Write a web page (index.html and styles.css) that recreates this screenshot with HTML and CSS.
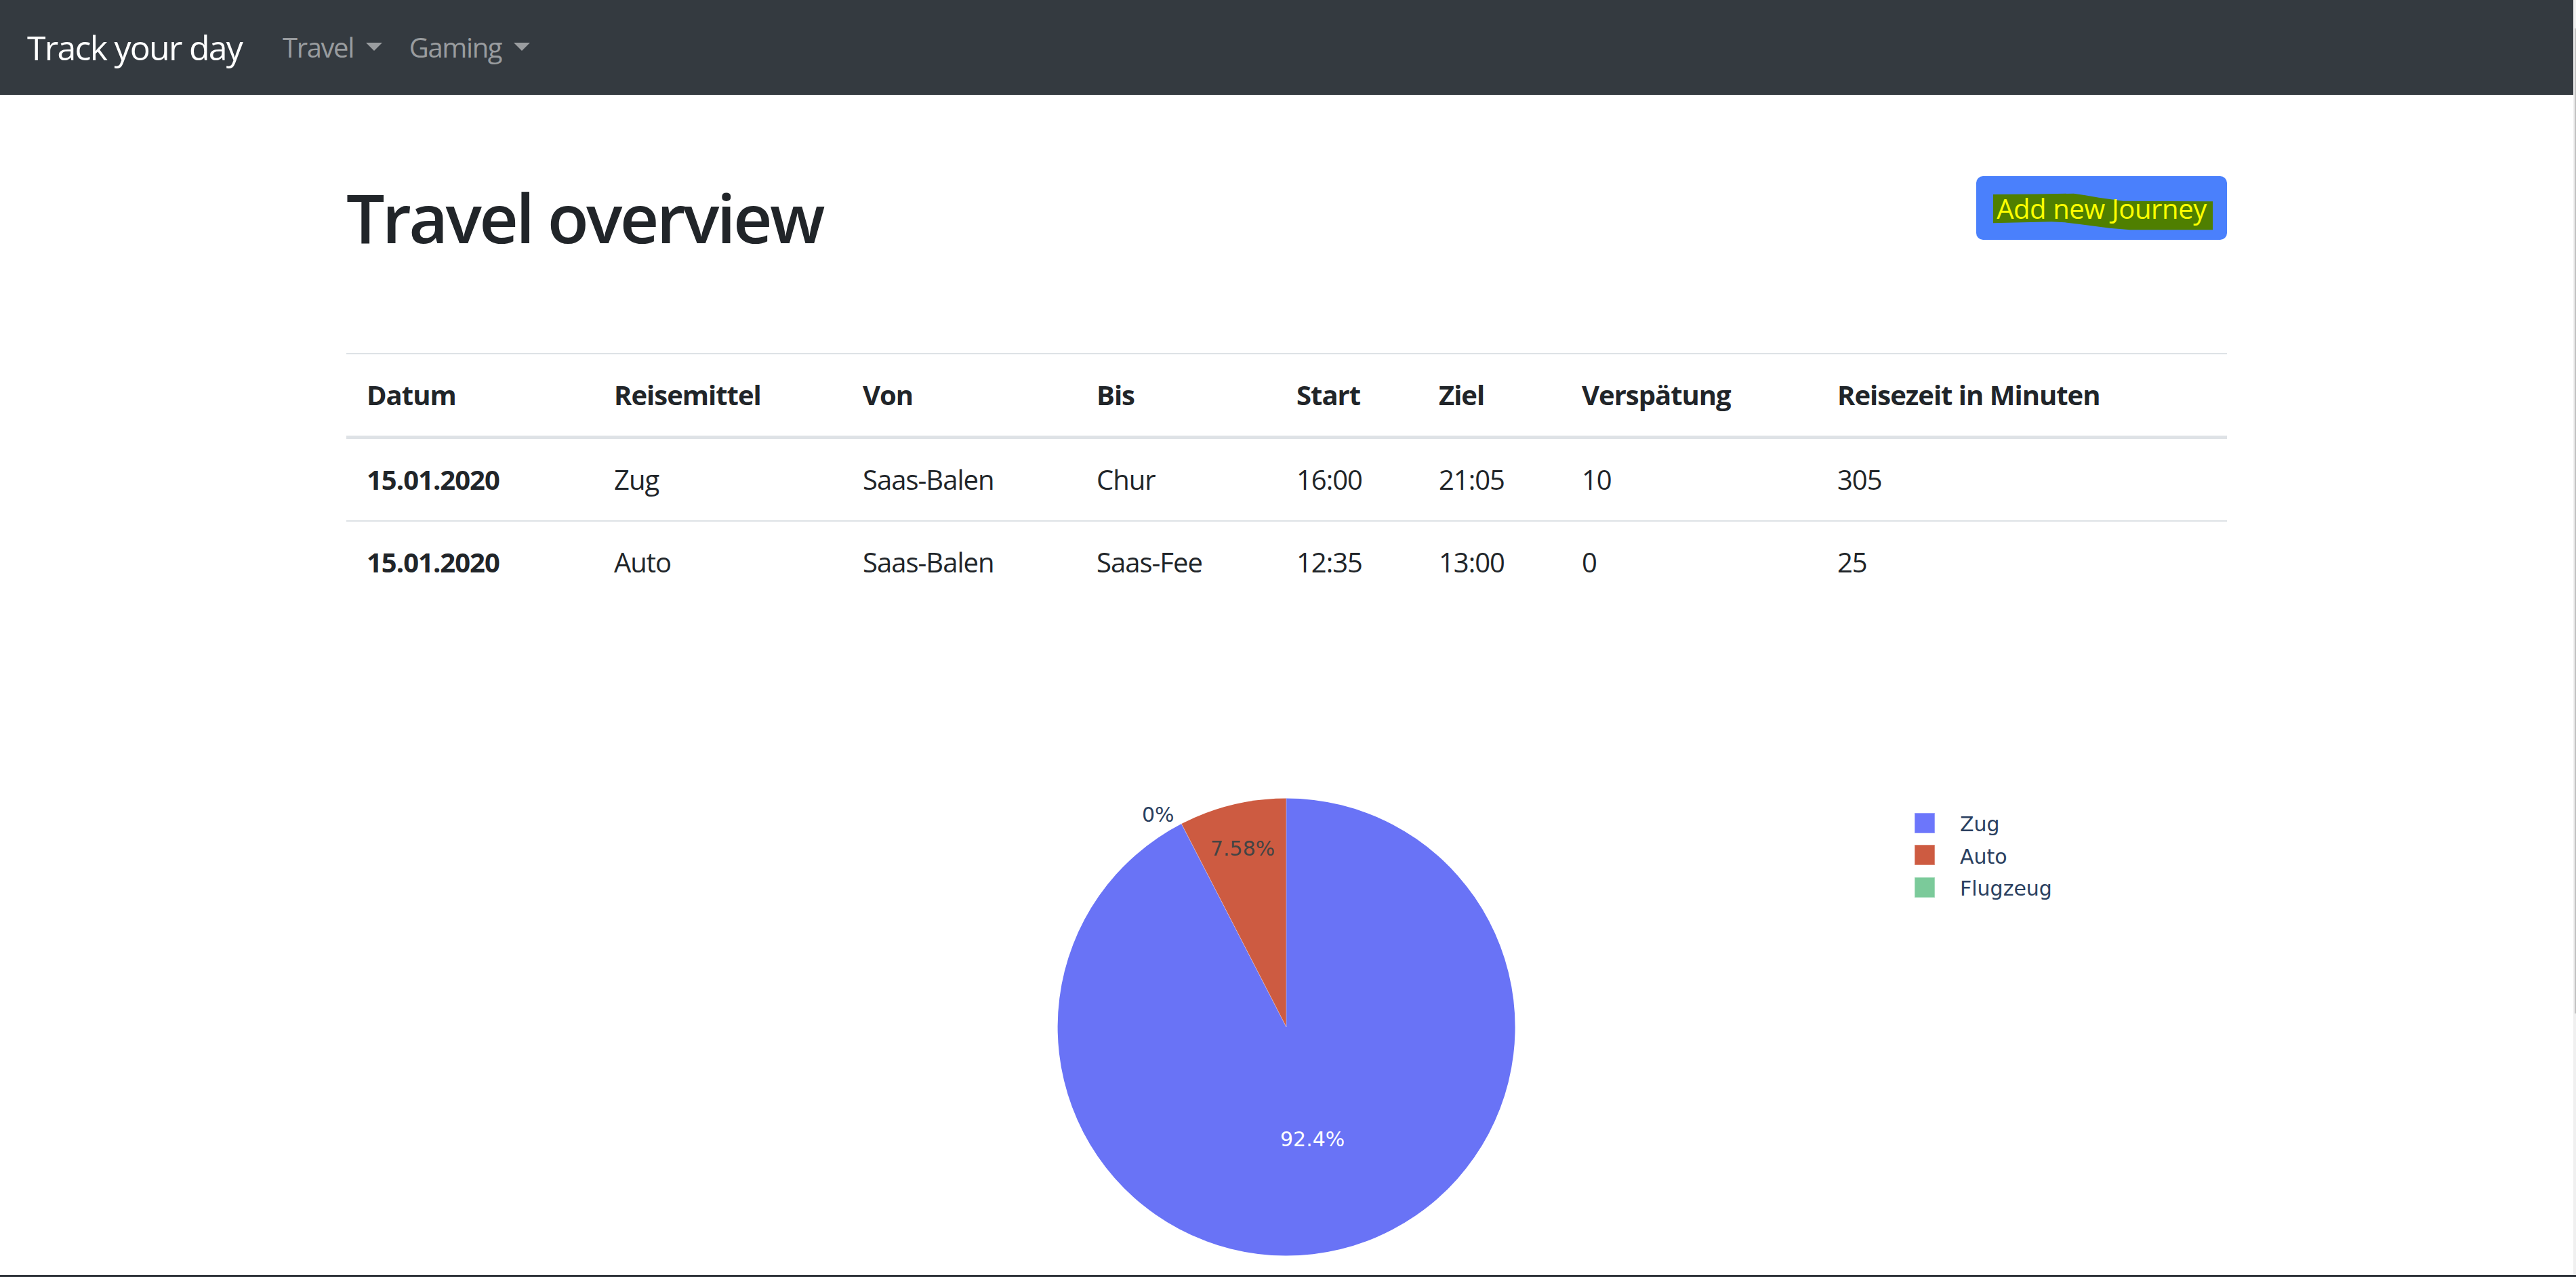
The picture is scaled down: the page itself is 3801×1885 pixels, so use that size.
FILE: index.html
```html
<!DOCTYPE html>
<html lang="de">
<head>
<meta charset="utf-8">
<title>Track your day</title>
<link rel="stylesheet" href="styles.css">
</head>
<body>
<div class="window">
  <div class="page">
    <nav class="navbar">
      <a class="brand">Track your day</a>
      <ul class="nav">
        <li><a class="nav-link dropdown-toggle">Travel</a></li>
        <li><a class="nav-link dropdown-toggle">Gaming</a></li>
      </ul>
    </nav>
    <main class="container">
      <div class="head-row">
        <h1>Travel overview</h1>
        <a class="btn">
          <svg class="marker" width="370" height="94" viewBox="0 0 370 94" aria-hidden="true">
            <polygon points="25,27 90,26.5 144,25.7 161,28.3 181,31.7 217,36.7 349,37.3 349,79.3 227,79.3 197,76.7 151,70.7 131,68.3 111,67.3 25,69.3" fill="#4f7f00"/>
          </svg>
          <span class="btn-label">Add new Journey</span>
        </a>
      </div>
      <table class="table">
        <colgroup>
          <col class="c1"><col class="c2"><col class="c3"><col class="c4">
          <col class="c5"><col class="c6"><col class="c7"><col class="c8">
        </colgroup>
        <thead>
          <tr>
            <th>Datum</th><th>Reisemittel</th><th>Von</th><th>Bis</th>
            <th>Start</th><th>Ziel</th><th>Verspätung</th><th>Reisezeit in Minuten</th>
          </tr>
        </thead>
        <tbody>
          <tr>
            <th>15.01.2020</th><td>Zug</td><td>Saas-Balen</td><td>Chur</td>
            <td>16:00</td><td>21:05</td><td>10</td><td>305</td>
          </tr>
          <tr>
            <th>15.01.2020</th><td>Auto</td><td>Saas-Balen</td><td>Saas-Fee</td>
            <td>12:35</td><td>13:00</td><td>0</td><td>25</td>
          </tr>
        </tbody>
      </table>
      <div class="chart">
        <svg class="chart-svg" width="2775" height="1125" viewBox="0 0 2775 1125">
          <path d="M1387,586 L1387,248.5 A337.5,337.5 0 1,1 1232.3,286.1 Z" fill="#6973f6"/>
          <path d="M1387,586 L1232.3,286.1 A337.5,337.5 0 0,1 1387,248.5 Z" fill="#cd5b41"/>
          <line x1="1387" y1="586" x2="1387" y2="248.5" stroke="#ffffff" stroke-opacity="0.35" stroke-width="1"/>
          <line x1="1387" y1="586" x2="1232.3" y2="286.1" stroke="#ffffff" stroke-opacity="0.35" stroke-width="1"/>
          <text class="pie-label dark" x="1275" y="333">7.58%</text>
          <text class="pie-label outside" x="1174" y="283">0%</text>
          <text class="pie-label light" x="1378" y="762">92.4%</text>
          <rect x="2314" y="270" width="30" height="30" fill="#6c76fb" stroke="#ffffff" stroke-opacity="0.4" stroke-width="1.5"/>
          <rect x="2314" y="317" width="30" height="30" fill="#cd5b41" stroke="#ffffff" stroke-opacity="0.4" stroke-width="1.5"/>
          <rect x="2314" y="365" width="30" height="30" fill="#7bca9a" stroke="#ffffff" stroke-opacity="0.4" stroke-width="1.5"/>
          <text class="legend-text" x="2381" y="297">Zug</text>
          <text class="legend-text" x="2381" y="345">Auto</text>
          <text class="legend-text" x="2381" y="392">Flugzeug</text>
        </svg>
      </div>
    </main>
  </div>
  <div class="scrollbar"><div class="thumb"></div></div>
</div>
<div class="frame-edge"></div>
</body>
</html>
```

FILE: styles.css
```css
html, body {
  margin: 0;
  padding: 0;
  height: 1885px;
  overflow: hidden;
  background: #ffffff;
}

body {
  display: flex;
  flex-direction: column;
  font-family: "Open Sans", "Noto Sans", "Liberation Sans", sans-serif;
  font-size: 40px;
  line-height: 60px;
  color: #212529;
}

.window {
  display: flex;
  height: 1882px;
  overflow: hidden;
}

.page {
  flex: 1;
  min-width: 0;
  overflow: hidden;
}

.scrollbar {
  width: 4px;
  background: #f0f0f0;
  display: flex;
  flex-direction: column;
}

.thumb {
  margin: 42px 0 0 2px;
  width: 2px;
  height: 1454px;
  background: #c1c1c1;
}

.frame-edge {
  height: 3px;
  background: #30353b;
}

/* Navbar */
.navbar {
  display: flex;
  align-items: center;
  height: 140px;
  box-sizing: border-box;
  padding: 20px 40px;
  background: #343a40;
}

.brand {
  font-size: 50px;
  line-height: 75px;
  padding: 12.5px 0;
  margin-right: 40px;
  color: #ffffff;
  letter-spacing: -0.035em;
}

.nav {
  display: flex;
  list-style: none;
  margin: 0;
  padding: 0;
}

.nav-link {
  display: block;
  padding: 20px;
  color: rgba(255, 255, 255, 0.5);
  letter-spacing: -0.035em;
}

.dropdown-toggle::after {
  content: "";
  display: inline-block;
  margin-left: 0.45em;
  vertical-align: 0.255em;
  border-top: 0.3em solid;
  border-right: 0.3em solid transparent;
  border-left: 0.3em solid transparent;
  border-bottom: 0;
}

/* Content */
.container {
  width: 2775px;
  margin: 0 auto;
}

.head-row {
  display: flex;
  justify-content: space-between;
  align-items: flex-start;
  margin-top: 120px;
}

h1 {
  margin: 0 0 20px;
  font-size: 100px;
  font-weight: 600;
  line-height: 120px;
  letter-spacing: -0.037em;
}

.btn {
  position: relative;
  display: inline-block;
  width: 370px;
  box-sizing: border-box;
  padding: 16px 0 14px;
  border: 2px solid #4a80fc;
  border-radius: 10px;
  background: #4a80fc;
  text-align: center;
  color: #ffff00;
}

.marker {
  position: absolute;
  left: -2px;
  top: -2px;
}

.btn-label {
  position: relative;
  letter-spacing: -0.01em;
}

/* Table */
.table {
  width: 100%;
  border-collapse: collapse;
  margin-top: 121px;
  margin-bottom: 40px;
  letter-spacing: -0.025em;
}

.c1 { width: 365px; }
.c2 { width: 367px; }
.c3 { width: 345px; }
.c4 { width: 295px; }
.c5 { width: 210px; }
.c6 { width: 211px; }
.c7 { width: 377px; }
.c8 { width: 605px; }

.table th,
.table td {
  padding: 30px;
  text-align: left;
  vertical-align: top;
  border-top: 2px solid #dee2e6;
}

.table th {
  font-weight: 700;
}

.table thead th {
  border-bottom: 5px solid #dee2e6;
}

/* Chart */
.chart-svg {
  display: block;
}

.pie-label,
.legend-text {
  font-family: "DejaVu Sans", "Liberation Sans", sans-serif;
  font-size: 30px;
}

.pie-label.dark { fill: #444444; }
.pie-label.light { fill: #ffffff; }
.pie-label.outside { fill: #2a3f5f; }
.legend-text { fill: #2a3f5f; }
```
